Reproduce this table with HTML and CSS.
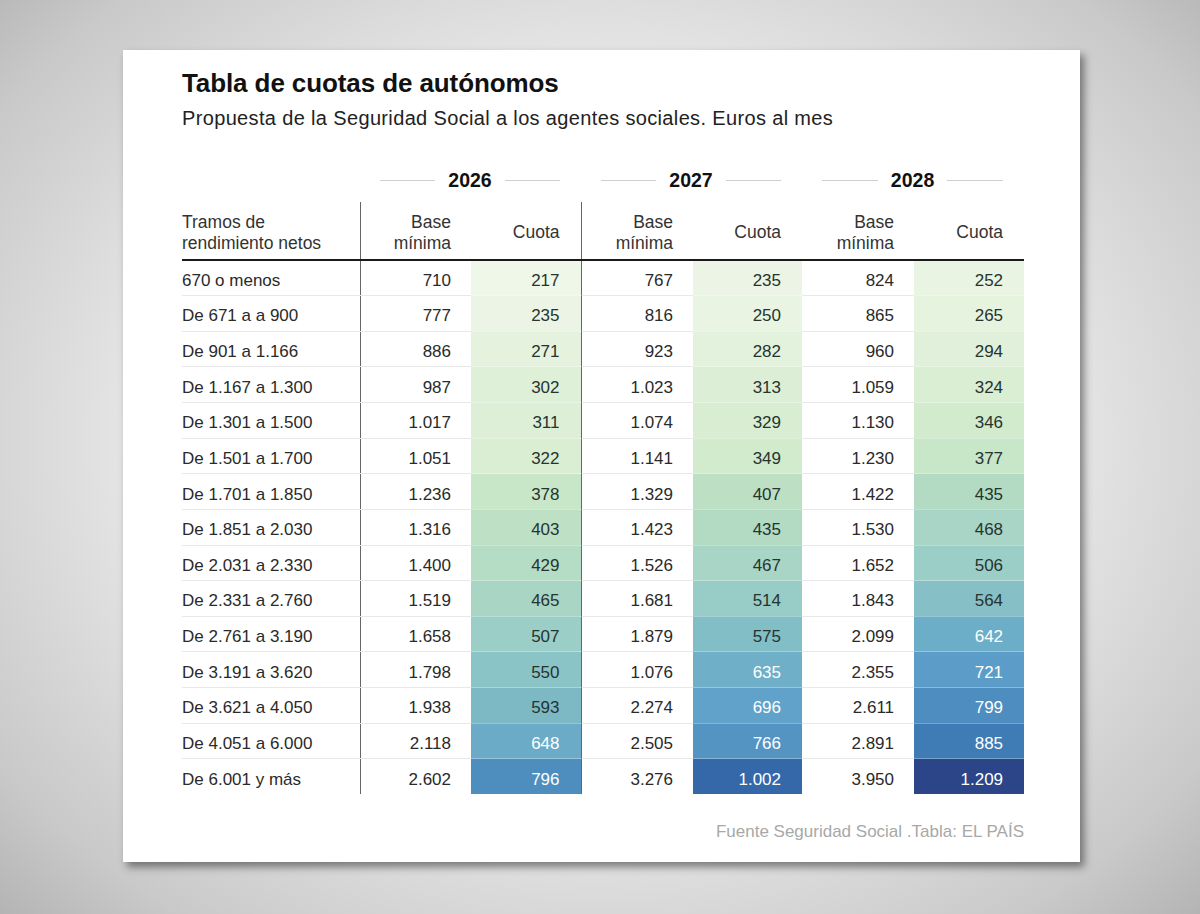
FILE: index.html
```html
<!DOCTYPE html>
<html lang="es">
<head>
<meta charset="utf-8">
<title>Tabla de cuotas de autónomos</title>
<link rel="stylesheet" href="styles.css">
</head>
<body>
<div class="card">
  <h1 class="title">Tabla de cuotas de autónomos</h1>
  <p class="subtitle">Propuesta de la Seguridad Social a los agentes sociales. Euros al mes</p>
  <table class="grid">
    <colgroup>
      <col class="c-label"><col class="c-base1"><col class="c-q1"><col class="c-base2"><col class="c-q2"><col class="c-base3"><col class="c-q3">
    </colgroup>
    <thead>
      <tr class="years">
        <th></th>
        <th colspan="2"><div class="year">2026</div></th>
        <th colspan="2"><div class="year">2027</div></th>
        <th colspan="2"><div class="year">2028</div></th>
      </tr>
      <tr class="heads">
        <th class="label sep">Tramos de<br>rendimiento netos</th>
        <th class="num">Base<br>mínima</th>
        <th class="num q sep">Cuota</th>
        <th class="num">Base<br>mínima</th>
        <th class="num q">Cuota</th>
        <th class="num">Base<br>mínima</th>
        <th class="num q">Cuota</th>
      </tr>
    </thead>
    <tbody>
      <tr><td class="label sep">670 o menos</td><td class="num">710</td><td class="num q sep" style="background:#eff7e8">217</td><td class="num">767</td><td class="num q" style="background:#ecf5e5">235</td><td class="num">824</td><td class="num q" style="background:#e9f4e2">252</td></tr>
      <tr><td class="label sep">De 671 a a 900</td><td class="num">777</td><td class="num q sep" style="background:#ecf5e5">235</td><td class="num">816</td><td class="num q" style="background:#e9f4e2">250</td><td class="num">865</td><td class="num q" style="background:#e6f3df">265</td></tr>
      <tr><td class="label sep">De 901 a 1.166</td><td class="num">886</td><td class="num q sep" style="background:#e5f2de">271</td><td class="num">923</td><td class="num q" style="background:#e3f2dc">282</td><td class="num">960</td><td class="num q" style="background:#e1f0da">294</td></tr>
      <tr><td class="label sep">De 1.167 a 1.300</td><td class="num">987</td><td class="num q sep" style="background:#dff0d8">302</td><td class="num">1.023</td><td class="num q" style="background:#dcefd6">313</td><td class="num">1.059</td><td class="num q" style="background:#d9eed3">324</td></tr>
      <tr><td class="label sep">De 1.301 a 1.500</td><td class="num">1.017</td><td class="num q sep" style="background:#ddefd6">311</td><td class="num">1.074</td><td class="num q" style="background:#d8edd1">329</td><td class="num">1.130</td><td class="num q" style="background:#d3ebcd">346</td></tr>
      <tr><td class="label sep">De 1.501 a 1.700</td><td class="num">1.051</td><td class="num q sep" style="background:#daeed3">322</td><td class="num">1.141</td><td class="num q" style="background:#d2ebcc">349</td><td class="num">1.230</td><td class="num q" style="background:#c8e6c8">377</td></tr>
      <tr><td class="label sep">De 1.701 a 1.850</td><td class="num">1.236</td><td class="num q sep" style="background:#c8e6c8">378</td><td class="num">1.329</td><td class="num q" style="background:#bde0c4">407</td><td class="num">1.422</td><td class="num q" style="background:#b3dbc4">435</td></tr>
      <tr><td class="label sep">De 1.851 a 2.030</td><td class="num">1.316</td><td class="num q sep" style="background:#bee0c4">403</td><td class="num">1.423</td><td class="num q" style="background:#b3dbc4">435</td><td class="num">1.530</td><td class="num q" style="background:#a8d5c5">468</td></tr>
      <tr><td class="label sep">De 2.031 a 2.330</td><td class="num">1.400</td><td class="num q sep" style="background:#b5dcc4">429</td><td class="num">1.526</td><td class="num q" style="background:#a8d5c5">467</td><td class="num">1.652</td><td class="num q" style="background:#9bcec6">506</td></tr>
      <tr><td class="label sep">De 2.331 a 2.760</td><td class="num">1.519</td><td class="num q sep" style="background:#a9d5c5">465</td><td class="num">1.681</td><td class="num q" style="background:#98ccc6">514</td><td class="num">1.843</td><td class="num q" style="background:#86c0c6">564</td></tr>
      <tr><td class="label sep">De 2.761 a 3.190</td><td class="num">1.658</td><td class="num q sep" style="background:#9bcec6">507</td><td class="num">1.879</td><td class="num q" style="background:#82bec6">575</td><td class="num">2.099</td><td class="num q w" style="background:#6cadc7">642</td></tr>
      <tr><td class="label sep">De 3.191 a 3.620</td><td class="num">1.798</td><td class="num q sep" style="background:#8bc4c6">550</td><td class="num">1.076</td><td class="num q w" style="background:#6fafc7">635</td><td class="num">2.355</td><td class="num q w" style="background:#5b9dc8">721</td></tr>
      <tr><td class="label sep">De 3.621 a 4.050</td><td class="num">1.938</td><td class="num q sep" style="background:#7cb9c5">593</td><td class="num">2.274</td><td class="num q w" style="background:#60a2ca">696</td><td class="num">2.611</td><td class="num q w" style="background:#4d8dbf">799</td></tr>
      <tr><td class="label sep">De 4.051 a 6.000</td><td class="num">2.118</td><td class="num q sep w" style="background:#6babc8">648</td><td class="num">2.505</td><td class="num q w" style="background:#5394c3">766</td><td class="num">2.891</td><td class="num q w" style="background:#3f7cb5">885</td></tr>
      <tr><td class="label sep">De 6.001 y más</td><td class="num">2.602</td><td class="num q sep w" style="background:#4e8ebf">796</td><td class="num">3.276</td><td class="num q w" style="background:#3468a9">1.002</td><td class="num">3.950</td><td class="num q w" style="background:#2c4488">1.209</td></tr>
    </tbody>
  </table>
  <p class="source">Fuente Seguridad Social .Tabla: EL PAÍS</p>
</div>
</body>
</html>
```

FILE: styles.css
```css
html, body {
  margin: 0;
  height: 914px;
}
body {
  padding: 50px 0 0 123px;
  box-sizing: border-box;
  background: radial-gradient(ellipse 75% 80% at 50% 48%, #fbfbfb 0%, #ececec 45%, #c9c9c9 80%, #a9a9a9 100%);
  font-family: "Liberation Sans", Arial, sans-serif;
  color: #222;
  overflow: hidden;
}
.card {
  width: 957px;
  height: 812px;
  box-sizing: border-box;
  background: #fff;
  padding: 18px 56px 0 59px;
  box-shadow: 4px 5px 8px rgba(0, 0, 0, 0.45);
}
.title {
  margin: 0;
  font-size: 26px;
  line-height: 30px;
  font-weight: bold;
  color: #111;
  letter-spacing: -0.1px;
}
.subtitle {
  margin: 8px 0 0;
  font-size: 20px;
  line-height: 24px;
  letter-spacing: 0.35px;
  color: #222;
}
.grid {
  margin-top: 32px;
  width: 842px;
  border-collapse: collapse;
  table-layout: fixed;
  font-size: 17px;
}
.c-label { width: 178px; }
.c-base1 { width: 111px; }
.c-q1 { width: 110px; }
.c-base2 { width: 112px; }
.c-q2 { width: 109px; }
.c-base3 { width: 112px; }
.c-q3 { width: 110px; }

.years th {
  height: 37px;
  padding: 0 0 3px;
  vertical-align: middle;
}
.year {
  display: flex;
  align-items: center;
  gap: 13px;
  padding: 0 21px 0 20px;
  font-size: 19.5px;
  font-weight: bold;
  color: #111;
}
.year::before, .year::after {
  content: "";
  flex: 1;
  height: 1px;
  background: #cfcfcf;
}
.heads th {
  box-sizing: border-box;
  height: 58px;
  padding: 5px 0 0;
  font-weight: normal;
  font-size: 17.5px;
  line-height: 21.5px;
  color: #333;
  border-bottom: 2px solid #1a1a1a;
  vertical-align: middle;
}
.label {
  text-align: left;
}
.num {
  text-align: right;
}
.heads th.num,
tbody td.num {
  padding-right: 20px;
}
.heads th.q,
tbody td.q {
  padding-right: 21px;
}
.sep {
  border-right: 1px solid #666;
}
tbody td {
  box-sizing: border-box;
  height: 35.64px;
  padding: 6px 0 0;
  border-bottom: 1px solid #e8e8e8;
  color: #2a2a2a;
  vertical-align: middle;
}
tbody td.q {
  border-bottom-color: rgba(255, 255, 255, 0.3);
  color: #263430;
}
tbody td.w {
  color: #fff;
}
tbody tr:last-child td {
  border-bottom: none;
}
.source {
  margin: 28px 0 0;
  text-align: right;
  font-size: 17px;
  line-height: 20px;
  color: #a8a8a8;
}
```
